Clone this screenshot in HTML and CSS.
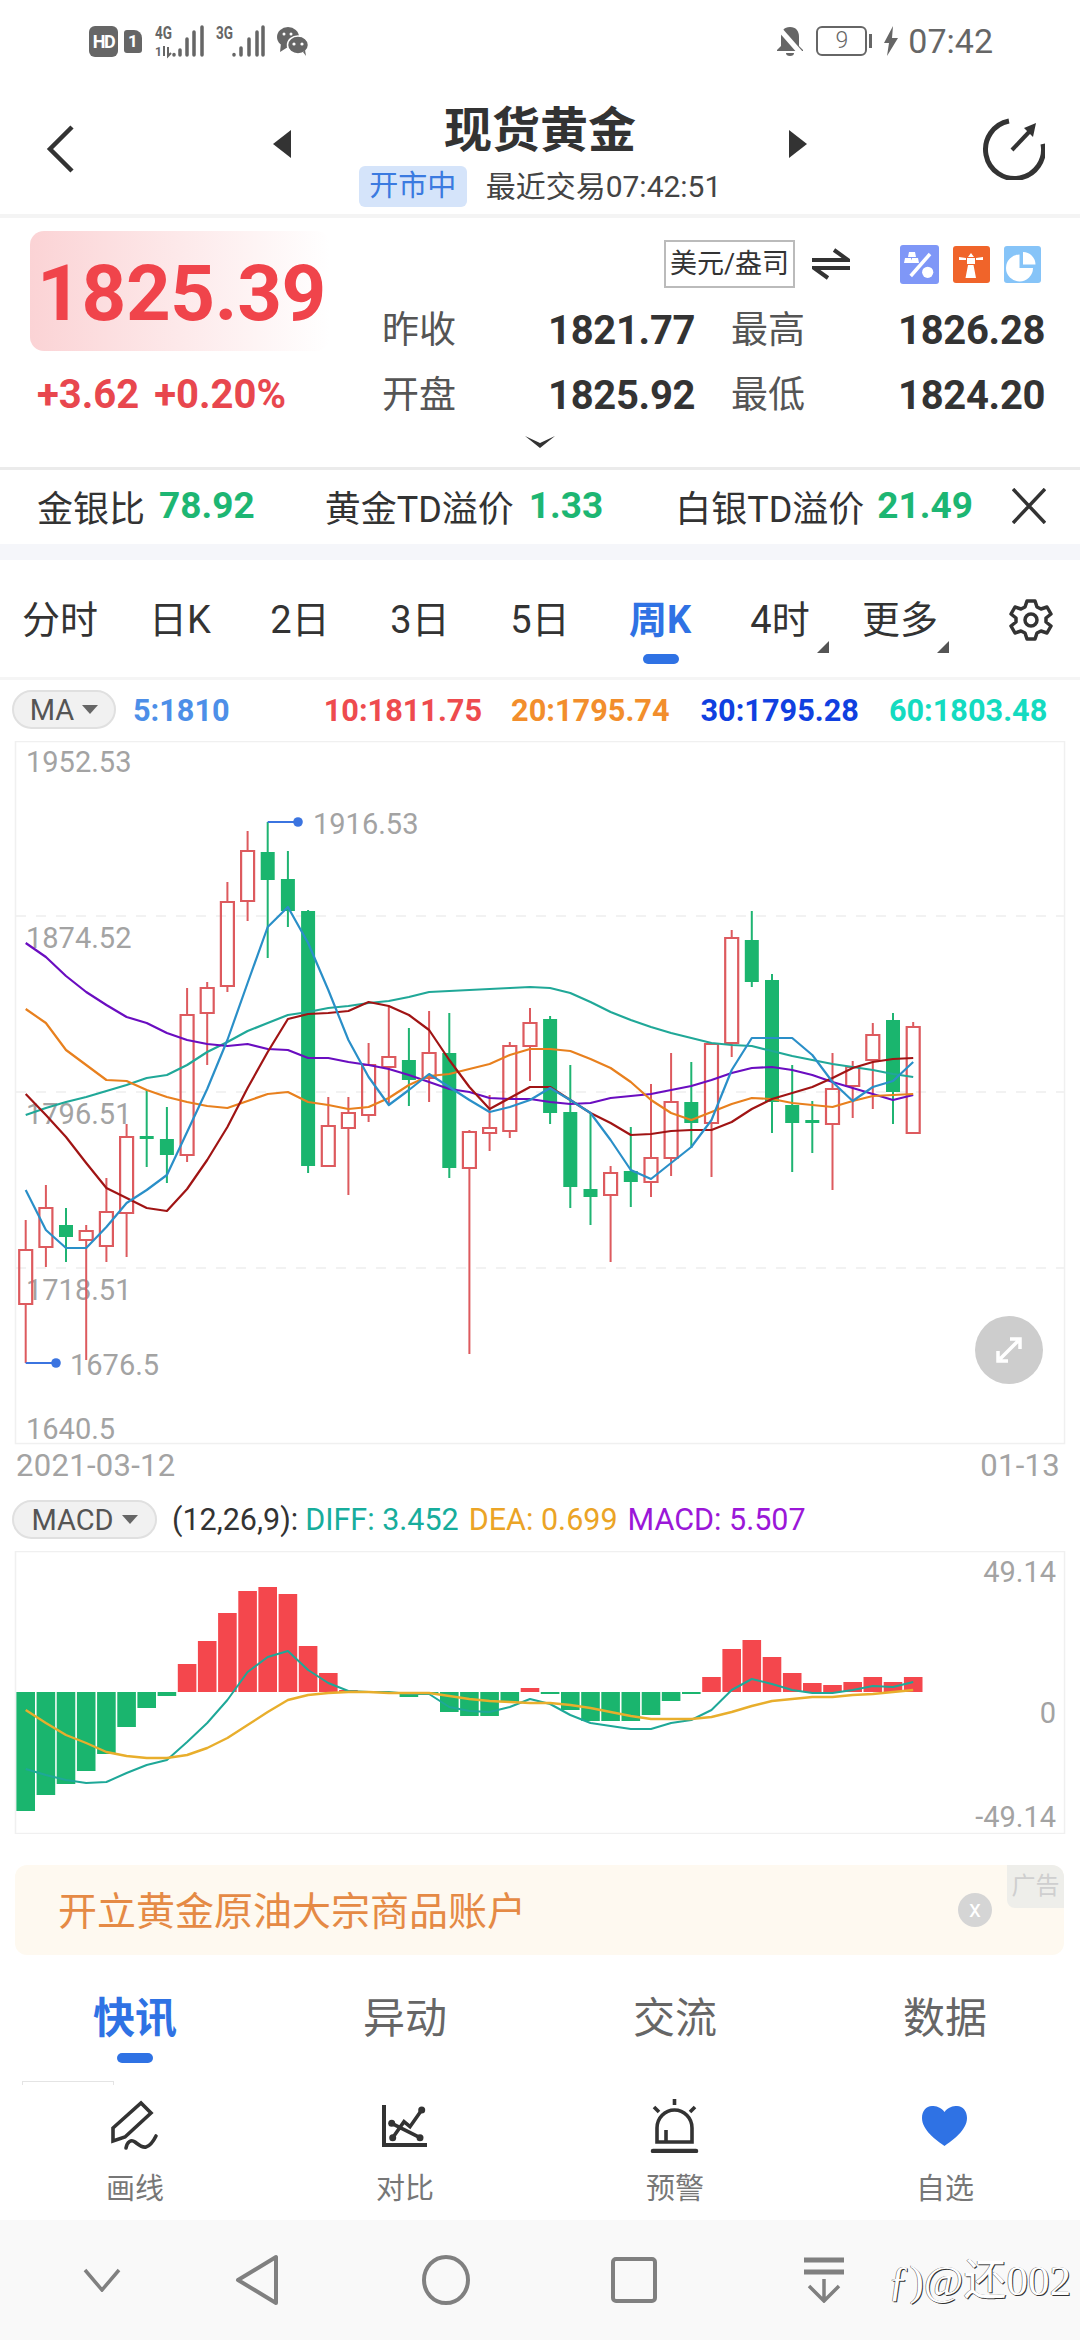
FILE: index.html
```html
<!DOCTYPE html>
<html lang="zh">
<head>
<meta charset="utf-8">
<title>现货黄金</title>
<link rel="stylesheet" href="styles.css">
</head>
<body>
<div class="page">
  <header class="status">
    <div class="status-left">
      <span class="hd">HD</span>
      <span class="sim">1</span>
      <svg class="sig" viewBox="0 -4 52 40" width="52" height="40">
        <text class="sig-t" x="1" y="14" textLength="17" lengthAdjust="spacingAndGlyphs">4G</text>
        <text class="sig-s" x="1" y="31">1</text>
        <path class="sig-a" d="M10 21v10M14 22v9l3-3"/>
        <path class="sig-bar" d="M20 29.5v.5M26 25v5M33 14v16M40 7v23M48 2v28"/>
      </svg>
      <svg class="sig" viewBox="0 -4 52 40" width="52" height="40">
        <text class="sig-t" x="1" y="14" textLength="17" lengthAdjust="spacingAndGlyphs">3G</text>
        <path class="sig-bar" d="M19 29.5v.5M26 23v7M34 14v16M42 7v23M48 2v28"/>
      </svg>
      <svg class="wx" viewBox="0 0 32 30" width="32" height="30">
        <ellipse class="wx-a" cx="11" cy="11" rx="11" ry="10"/>
        <path class="wx-a" d="M4 17l-1 9 8-5z"/>
        <ellipse class="wx-b" cx="21" cy="19" rx="10.5" ry="9"/>
        <path class="wx-a" d="M26 26l3 4-1-6z"/>
        <circle class="wx-e" cx="7" cy="8" r="1.5"/><circle class="wx-e" cx="14" cy="8" r="1.5"/>
        <circle class="wx-e" cx="17" cy="18" r="1.6"/><circle class="wx-e" cx="25" cy="18" r="1.6"/>
      </svg>
    </div>
    <div class="status-right">
      <svg class="bell" viewBox="0 0 32 32" width="32" height="32">
        <path class="bell-f" d="M16 2c-6 0-9 4-9 10v9l-4 4v1h26v-1l-4-4v-9c0-6-3-10-9-10z"/>
        <path class="bell-f" d="M12 28h8a4 3 0 0 1-8 0z"/>
        <path class="bell-s" d="M2 0l28 32"/>
      </svg>
      <span class="batt"><span class="batt-n">9</span></span><span class="batt-tip"></span>
      <svg class="bolt" viewBox="0 0 14 30" width="14" height="30"><path class="bell-f" d="M9 0L0 17h5L3 30l11-18H8z"/></svg>
      <span class="clock">07:42</span>
    </div>
  </header>

  <nav class="nav">
    <svg class="back" viewBox="0 0 28 48" width="28" height="48"><path class="ln-dark" d="M26 2L4 24l22 22"/></svg>
    <div class="nav-center">
      <svg class="tri" viewBox="0 0 18 28" width="18" height="28"><path class="fill-dark" d="M18 0v28L0 14z"/></svg>
      <div class="nav-title">
        <h1 class="title">现货黄金</h1>
        <div class="sub"><span class="open">开市中</span><span class="last">最近交易07:42:51</span></div>
      </div>
      <svg class="tri" viewBox="0 0 18 28" width="18" height="28"><path class="fill-dark" d="M0 0v28l18-14z"/></svg>
    </div>
    <svg class="refresh" viewBox="0 0 64 64" width="64" height="64">
      <path class="ln-ref" d="M28 5A29 29 0 1 0 62 28"/>
      <path class="ln-ref2" d="M31 34L49 15"/>
      <path class="fill-dark" d="M43 12l12-5-3 14z"/>
    </svg>
  </nav>

  <section class="quote">
    <div class="quote-main">
      <div class="q-left">
        <div class="price-box"><span class="price">1825.39</span></div>
        <div class="change"><span>+3.62</span><span>+0.20%</span></div>
      </div>
      <div class="q-right">
        <div class="q-tools">
          <span class="unit">美元/盎司</span>
          <svg class="swap" viewBox="0 0 38 32" width="38" height="32"><path class="ln-swap" d="M0 12h36L22 2M38 20H2l14 10"/></svg>
          <svg class="ic ic1" viewBox="0 0 39 39" width="39" height="39">
            <rect class="ic-blue" width="39" height="39" rx="3"/>
            <path class="ic-w" d="M30 9L10.7 31"/>
            <path class="ic-wf" d="M9 7h6l1 5H8zM5 13h6l1 5H4zM12 13h6l1 5h-8z"/>
            <circle class="ic-wf" cx="27.7" cy="27.3" r="5.6"/>
          </svg>
          <svg class="ic ic2" viewBox="0 0 37 37" width="37" height="37">
            <rect class="ic-orange" width="37" height="37" rx="3"/>
            <path class="ic-wf" d="M15 19h5.5l2.500 13H12.500zM14 12h8v6h-8zM15 11l3-4 3 4zM6 11l7 1v2l-7 0zM30 11l-7 1v2l7 0z"/>
          </svg>
          <svg class="ic" viewBox="0 0 37 37" width="37" height="37">
            <rect class="ic-sky" width="37" height="37" rx="3"/>
            <path class="ic-wf" d="M15.5 8.5A13.5 13.5 0 1 0 29 22H15.5zM19 6A12.5 12.5 0 0 1 31.5 18.5H19z"/>
          </svg>
        </div>
        <div class="stats">
          <span class="s-k">昨收</span><span class="s-v">1821.77</span><span class="s-k">最高</span><span class="s-v">1826.28</span>
          <span class="s-k">开盘</span><span class="s-v">1825.92</span><span class="s-k">最低</span><span class="s-v">1824.20</span>
        </div>
      </div>
    </div>
    <svg class="more" viewBox="0 0 30 12" width="30" height="12"><path class="fill-dark" d="M0 0l15 7 15-7-15 12z"/></svg>
  </section>

  <section class="ratio">
    <span class="r-k">金银比</span><span class="r-v r-a">78.92</span>
    <span class="r-k r-b">黄金TD溢价</span><span class="r-v r-c">1.33</span>
    <span class="r-k r-d">白银TD溢价</span><span class="r-v r-e">21.49</span>
    <svg class="r-x" viewBox="0 0 34 36" width="34" height="36"><path class="ln-x" d="M1 1l32 34M33 1L1 35"/></svg>
  </section>
  <div class="band"></div>

  <section class="periods">
    <span class="p">分时</span><span class="p">日K</span><span class="p">2日</span><span class="p">3日</span><span class="p">5日</span>
    <span class="p p-on">周K</span><span class="p p-tri">4时</span><span class="p p-tri">更多</span>
    <svg class="gear" viewBox="0 0 44 44" width="44" height="44">
      <path class="ln-gear" d="M18 3h8l2 6 4 2 6-2 4 7-5 4v4l5 4-4 7-6-2-4 2-2 6h-8l-2-6-4-2-6 2-4-7 5-4v-4l-5-4 4-7 6 2 4-2z"/>
      <circle class="ln-gear" cx="22" cy="22" r="6"/>
    </svg>
  </section>

  <section class="ma-row">
    <span class="pill pill-ma">MA<i class="caret"></i></span>
    <span class="ma m5">5:1810</span>
    <span class="ma m10">10:1811.75</span>
    <span class="ma m20">20:1795.74</span>
    <span class="ma m30">30:1795.28</span>
    <span class="ma m60">60:1803.48</span>
  </section>

  <svg class="kline" viewBox="0 741 1080 707" width="1080" height="707">
    <rect class="frame" x="15.5" y="741.5" width="1049" height="702"/>
    <path class="grid" d="M16 916H1064M16 1092H1064M16 1268H1064"/>
    <text class="ax" x="26" y="772">1952.53</text>
    <text class="ax" x="26" y="948">1874.52</text>
    <text class="ax" x="26" y="1124">1796.51</text>
    <text class="ax" x="26" y="1300">1718.51</text>
    <text class="ax" x="26" y="1439">1640.5</text>

    <path class="wick-r" d="M25.7 1220V1250M25.7 1304V1363M45.9 1185V1208M45.9 1247V1267M86.2 1225V1231M86.2 1240V1360M106.4 1178V1212M106.4 1246V1262M126.6 1124V1137M126.6 1213V1257M187.1 988V1015M187.1 1155V1162M207.2 982V988M207.2 1013V1065M227.4 882V902M227.4 986V992M247.6 831V851M247.6 901V921M328.3 1097V1126M348.4 1097V1113M348.4 1128V1195M368.6 1043V1065M368.6 1115V1122M388.8 1007V1057M388.8 1067V1105M429.1 1011V1053M429.1 1078V1102M469.4 1130V1132M469.4 1168V1354M489.6 1095V1128M489.6 1133V1151M509.8 1042V1046M509.8 1131V1138M530 1008V1023M530 1046V1081M610.6 1166V1173M610.6 1195V1262M651 1084V1158M651 1182V1197M671.1 1053V1102M671.1 1158V1176M711.5 1123V1177M731.7 930V938M731.7 1043V1057M832.5 1053V1089M832.5 1124V1190M852.7 1061V1067M852.7 1086V1118M872.8 1023V1035M872.8 1060V1109M913.2 1022V1027"/>
    <path class="body-r" d="M19.2 1250h13v54h-13zM39.4 1208h13v39h-13zM79.7 1231h13v9h-13zM99.9 1212h13v34h-13zM120.1 1137h13v76h-13zM180.6 1015h13v140h-13zM200.7 988h13v25h-13zM220.9 902h13v84h-13zM241.1 851h13v50h-13zM321.8 1126h13v40h-13zM341.9 1113h13v15h-13zM362.1 1065h13v50h-13zM382.3 1057h13v10h-13zM422.6 1053h13v25h-13zM462.9 1132h13v36h-13zM483.1 1128h13v5h-13zM503.3 1046h13v85h-13zM523.5 1023h13v23h-13zM604.1 1173h13v22h-13zM644.5 1158h13v24h-13zM664.6 1102h13v56h-13zM705 1044h13v79h-13zM725.2 938h13v105h-13zM826 1089h13v35h-13zM846.2 1067h13v19h-13zM866.3 1035h13v25h-13zM906.7 1027h13v106h-13z"/>

    <path class="wick-g" d="M66 1208V1262M146.7 1090V1167M166.9 1107V1183M267.7 822V958M287.9 851V927M308.1 910V1173M408.9 1028V1106M449.3 1013V1178M550.1 1016V1124M570.3 1065V1208M590.5 1113V1225M630.8 1127V1207M691.3 1062V1148M751.8 911V987M772 974V1133M792.2 1065V1172M812.3 1101V1153M893 1013V1124"/>
    <path class="body-g" d="M59 1225h14v12h-14zM139.7 1136h14v3h-14zM159.9 1139h14v16h-14zM260.7 852h14v28h-14zM280.9 879h14v32h-14zM301.1 911h14v255h-14zM401.9 1060h14v20h-14zM442.3 1053h14v115h-14zM543.1 1019h14v94h-14zM563.3 1112h14v75h-14zM583.5 1189h14v8h-14zM623.8 1171h14v11h-14zM684.3 1102h14v21h-14zM744.8 940h14v42h-14zM765 980h14v122h-14zM785.2 1105h14v18h-14zM805.3 1120h14v3h-14zM886 1020h14v72h-14z"/>

    <polyline class="l l60" points="25.7,1115 45.9,1108 66,1102 86.2,1097 106.4,1091 126.6,1085 146.7,1078 166.9,1075 187.1,1065 207.2,1052 227.4,1042 247.6,1031 267.7,1023 287.9,1015 308.1,1012 328.3,1008 348.4,1006 368.6,1003 388.8,1001 408.9,997 429.1,992 449.3,991 469.4,990 489.6,989 509.8,988 530,987 550.1,988 570.3,993 590.5,1002 610.6,1012 630.8,1020 651,1027 671.1,1033 691.3,1038 711.5,1043 731.7,1045 751.8,1046 772,1051 792.2,1056 812.3,1060 832.5,1064 852.7,1067 872.8,1070 893,1074 913.2,1077"/>
    <polyline class="l l30" points="25.7,943 45.9,957 66,976 86.2,992 106.4,1005 126.6,1017 146.7,1023 166.9,1033 187.1,1040 207.2,1044 227.4,1046 247.6,1044 267.7,1049 287.9,1050 308.1,1058 328.3,1058 348.4,1062 368.6,1065 388.8,1069 408.9,1075 429.1,1082 449.3,1089 469.4,1092 489.6,1098 509.8,1099 530,1099 550.1,1102 570.3,1104 590.5,1103 610.6,1098 630.8,1096 651,1094 671.1,1090 691.3,1086 711.5,1080 731.7,1073 751.8,1068 772,1067 792.2,1070 812.3,1075 832.5,1082 852.7,1088 872.8,1094 893,1100 913.2,1095"/>
    <polyline class="l l20" points="25.7,1009 45.9,1023 66,1050 86.2,1065 106.4,1080 126.6,1081 146.7,1090 166.9,1097 187.1,1102 207.2,1106 227.4,1108 247.6,1101 267.7,1094 287.9,1092 308.1,1102 328.3,1105 348.4,1109 368.6,1107 388.8,1098 408.9,1085 429.1,1076 449.3,1074 469.4,1069 489.6,1064 509.8,1055 530,1049 550.1,1049 570.3,1051 590.5,1059 610.6,1068 630.8,1082 651,1100 671.1,1113 691.3,1120 711.5,1112 731.7,1104 751.8,1098 772,1099 792.2,1103 812.3,1105 832.5,1107 852.7,1101 872.8,1096 893,1095 913.2,1094"/>
    <polyline class="l l10" points="25.7,1094 45.9,1115 66,1137 86.2,1163 106.4,1188 126.6,1198 146.7,1208 166.9,1211 187.1,1189 207.2,1160 227.4,1127 247.6,1088 267.7,1052 287.9,1019 308.1,1014 328.3,1013 348.4,1011 368.6,1002 388.8,1006 408.9,1015 429.1,1030 449.3,1060 469.4,1087 489.6,1109 509.8,1098 530,1087 550.1,1087 570.3,1100 590.5,1113 610.6,1123 630.8,1135 651,1134 671.1,1131 691.3,1130 711.5,1130 731.7,1122 751.8,1109 772,1099 792.2,1093 812.3,1087 832.5,1078 852.7,1068 872.8,1062 893,1059 913.2,1058"/>
    <polyline class="l l5" points="25.7,1190 45.9,1230 66,1248 86.2,1248 106.4,1227 126.6,1203 146.7,1190 166.9,1175 187.1,1132 207.2,1089 227.4,1040 247.6,983 267.7,927 287.9,907 308.1,943 328.3,990 348.4,1040 368.6,1077 388.8,1105 408.9,1090 429.1,1074 449.3,1087 469.4,1100 489.6,1112 509.8,1107 530,1100 550.1,1088 570.3,1100 590.5,1113 610.6,1140 630.8,1170 651,1179 671.1,1163 691.3,1147 711.5,1120 731.7,1070 751.8,1038 772,1038 792.2,1038 812.3,1055 832.5,1082 852.7,1101 872.8,1087 893,1081 913.2,1062"/>

    <path class="mark" d="M267.7 822H298M25.7 1363H56"/>
    <circle class="dot" cx="298" cy="822" r="4.8"/>
    <circle class="dot" cx="56" cy="1363" r="4.8"/>
    <text class="ax" x="313" y="834">1916.53</text>
    <text class="ax" x="70" y="1375">1676.5</text>
    <circle class="zoom-bg" cx="1009" cy="1350" r="34"/>
    <path class="zoom-a" d="M1000 1359l18-18M1010 1339h10v10M1008 1361h-10v-10"/>
  </svg>

  <div class="dates"><span>2021-03-12</span><span>01-13</span></div>

  <section class="macd-row">
    <span class="pill pill-macd">MACD<i class="caret"></i></span>
    <span class="mc-par">(12,26,9):</span>
    <span class="mc-diff">DIFF: 3.452</span>
    <span class="mc-dea">DEA: 0.699</span>
    <span class="mc-macd">MACD: 5.507</span>
  </section>

  <svg class="macd" viewBox="0 1551 1080 283" width="1080" height="283">
    <rect class="frame" x="15.5" y="1551.5" width="1049" height="282"/>
    <path class="bar-g" d="M16.4 1692h18.6V1811h-18.6zM36.6 1692h18.6V1795h-18.6zM56.7 1692h18.6V1784h-18.6zM76.9 1692h18.6V1771h-18.6zM97.1 1692h18.6V1754h-18.6zM117.3 1692h18.6V1727h-18.6zM137.4 1692h18.6V1708h-18.6zM157.6 1692h18.6V1696h-18.6zM399.6 1692h18.6V1697h-18.6zM419.8 1692h18.6V1694h-18.6zM440 1692h18.6V1712h-18.6zM460.1 1692h18.6V1716h-18.6zM480.3 1692h18.6V1716h-18.6zM500.5 1692h18.6V1702h-18.6zM540.8 1692h18.6V1694h-18.6zM561 1692h18.6V1710h-18.6zM581.2 1692h18.6V1721h-18.6zM601.3 1692h18.6V1721h-18.6zM621.5 1692h18.6V1721h-18.6zM641.7 1692h18.6V1715h-18.6zM661.8 1692h18.6V1701h-18.6zM682 1692h18.6V1694h-18.6z"/>
    <path class="bar-r" d="M177.8 1664h18.6V1692h-18.6zM197.9 1641h18.6V1692h-18.6zM218.1 1613h18.6V1692h-18.6zM238.3 1591h18.6V1692h-18.6zM258.4 1587h18.6V1692h-18.6zM278.6 1594h18.6V1692h-18.6zM298.8 1646h18.6V1692h-18.6zM319 1673h18.6V1692h-18.6zM339.1 1690h18.6V1692h-18.6zM520.7 1688h18.6V1692h-18.6zM702.2 1677h18.6V1692h-18.6zM722.4 1649h18.6V1692h-18.6zM742.5 1640h18.6V1692h-18.6zM762.7 1657h18.6V1692h-18.6zM782.9 1673h18.6V1692h-18.6zM803 1683h18.6V1692h-18.6zM823.2 1685h18.6V1692h-18.6zM843.4 1682h18.6V1692h-18.6zM863.5 1677h18.6V1692h-18.6zM883.7 1682h18.6V1692h-18.6zM903.9 1677h18.6V1692h-18.6z"/>
    <polyline class="l diff" points="25.7,1769 45.9,1775 66,1780 86.2,1783 106.4,1782 126.6,1773 146.7,1765 166.9,1760 187.1,1742 207.2,1723 227.4,1700 247.6,1672 267.7,1657 287.9,1651 308.1,1670 328.3,1683 348.4,1691 368.6,1692 388.8,1692 408.9,1694 429.1,1694 449.3,1707 469.4,1711 489.6,1712 509.8,1707 530,1699 550.1,1704 570.3,1715 590.5,1723 610.6,1726 630.8,1729 651,1729 671.1,1723 691.3,1720 711.5,1710 731.7,1690 751.8,1679 772,1684 792.2,1690 812.3,1693 832.5,1693 852.7,1690 872.8,1686 893,1687 913.2,1682"/>
    <polyline class="l dea" points="25.7,1710 45.9,1723 66,1735 86.2,1743 106.4,1752 126.6,1756 146.7,1758 166.9,1758 187.1,1755 207.2,1748 227.4,1738 247.6,1725 267.7,1712 287.9,1700 308.1,1695 328.3,1693 348.4,1692 368.6,1692 388.8,1693 408.9,1693 429.1,1693 449.3,1696 469.4,1699 489.6,1701 509.8,1702 530,1703 550.1,1703 570.3,1705 590.5,1708 610.6,1712 630.8,1716 651,1719 671.1,1719 691.3,1719 711.5,1717 731.7,1712 751.8,1706 772,1701 792.2,1699 812.3,1697 832.5,1697 852.7,1695 872.8,1694 893,1692 913.2,1690"/>
    <text class="ax ax-m" x="1056" y="1582">49.14</text>
    <text class="ax ax-m" x="1056" y="1723">0</text>
    <text class="ax ax-m" x="1056" y="1827">-49.14</text>
  </svg>

  <aside class="ad">
    <span class="ad-t">开立黄金原油大宗商品账户</span>
    <span class="ad-x">x</span>
    <span class="ad-tag">广告</span>
  </aside>

  <section class="tabs">
    <div class="tab-row">
      <span class="tab tab-on">快讯</span><span class="tab">异动</span><span class="tab">交流</span><span class="tab">数据</span>
    </div>
    <i class="stub"></i>
  </section>

  <section class="tools">
    <div class="tool">
      <svg viewBox="0 0 50 56" width="50" height="56">
        <path class="ln-tool" d="M3 31L31 6l10 10-26 24-12 4z"/>
        <path class="ln-tool-r" d="M16 51c1-6 5-9 9-6s7 6 11 5 7-5 10-11"/>
      </svg>
      <span class="t-l">画线</span>
    </div>
    <div class="tool">
      <svg viewBox="0 0 50 56" width="50" height="56">
        <path class="ln-axis" d="M4 8v40h43"/>
        <path class="ln-tool" d="M11.7 26.3L40 40.7M12.7 40.7L24 24.7l6 5L41.7 13"/>
        <circle class="dk" cx="11.7" cy="26.3" r="3.5"/><circle class="dk" cx="40" cy="40.7" r="3.5"/>
        <circle class="dk" cx="12.7" cy="40.7" r="3.5"/><circle class="dk" cx="41.7" cy="13" r="3.5"/>
      </svg>
      <span class="t-l">对比</span>
    </div>
    <div class="tool">
      <svg viewBox="0 0 50 56" width="50" height="56">
        <path class="ln-tool" d="M24.5 2v6M4 10l5 5M45 10l-5 5M7 45V31a17.5 18 0 0 1 35 0v14zM16 33v12"/>
        <path class="ln-tool3" d="M3 54h43"/>
      </svg>
      <span class="t-l">预警</span>
    </div>
    <div class="tool">
      <svg viewBox="0 0 50 56" width="50" height="56">
        <path class="heart" d="M24.5 15C21 10 16 9 12 9 6 9 2 14 2 21c0 12 14 22 22.5 28C33 43 47 33 47 21c0-7-4-12-10-12-4 0-9 1-12.5 6z"/>
      </svg>
      <span class="t-l">自选</span>
    </div>
  </section>

  <footer class="sysnav">
    <svg class="n1" viewBox="0 0 38 24" width="38" height="24"><path class="ln-nav" d="M2 2l17 20L36 2"/></svg>
    <svg class="n2" viewBox="0 0 44 52" width="44" height="52"><path class="ln-nav3" d="M41 3v46L3 26z"/></svg>
    <svg class="n3" viewBox="0 0 48 50" width="48" height="50"><ellipse class="ln-nav3" cx="24" cy="25" rx="22" ry="23"/></svg>
    <svg class="n4" viewBox="0 0 46 46" width="46" height="46"><rect class="ln-nav3" x="2" y="2" width="42" height="42" rx="3"/></svg>
    <svg class="n5" viewBox="0 0 40 46" width="40" height="46"><path class="ln-nav4" d="M0 3h40M0 15h40"/><path class="ln-nav" d="M20 22v22M5 29l15 15 15-15"/></svg>
    <span class="wm">ƒ)@还002</span>
  </footer>
</div>
</body>
</html>
```

FILE: styles.css
```css
* { box-sizing: border-box; }
html, body { margin: 0; padding: 0; background: #fff; }
body { font-family: Roboto, "Noto Sans CJK SC", sans-serif; color: #333; }
.page { position: relative; width: 1080px; height: 2340px; overflow: hidden; background: #fff; }
svg { display: block; flex: none; }
h1 { margin: 0; }

/* status bar */
.status { height: 80px; display: flex; justify-content: space-between; align-items: center; padding: 2px 87px 0 89px; }
.status-left, .status-right { display: flex; align-items: center; }
.hd { width: 29px; height: 31px; border-radius: 6px; background: #666; color: #fff; font-size: 18px; font-weight: 700; text-align: center; line-height: 31px; letter-spacing: -1.5px; }
.sim { width: 18px; height: 23px; margin-left: 6px; border-radius: 3px 8px 3px 3px; background: #666; color: #fff; font-size: 17px; font-weight: 700; text-align: center; line-height: 23px; }
.sig { margin-left: 12px; }
.sig + .sig { margin-left: 9px; }
.sig-t { font: 700 18px Roboto, sans-serif; fill: #666; }
.sig-s { font: 700 12px Roboto, sans-serif; fill: #666; }
.sig-a { fill: none; stroke: #666; stroke-width: 2; }
.sig-bar { fill: none; stroke: #666; stroke-width: 3.5; stroke-linecap: round; }
.wx { margin-left: 10px; }
.wx-a { fill: #666; }
.wx-b { fill: #666; stroke: #fff; stroke-width: 1.5; }
.wx-e { fill: #fff; }
.bell-f { fill: #666; }
.bell-s { stroke: #fff; stroke-width: 5; fill: none; }
.bell { margin-right: 10px; }
.batt { width: 51px; height: 30px; border: 2.5px solid #666; border-radius: 6px; color: #666; font-size: 23px; text-align: center; line-height: 25px; font-weight: 300; }
.batt-tip { width: 3px; height: 14px; background: #666; margin: 0 12px 0 2px; }
.bolt { margin-right: 10px; }
.clock { color: #666; font-size: 34px; line-height: 40px; }

/* nav */
.nav { height: 134px; display: flex; align-items: flex-start; justify-content: space-between; padding: 45px 35px 0 46px; }
.ln-dark { fill: none; stroke: #333; stroke-width: 4.5; }
.fill-dark { fill: #333; }
.nav-center { display: flex; align-items: flex-start; margin: -25px 0 0 25px; }
.tri { margin-top: 30px; }
.nav-title { width: 498px; display: flex; flex-direction: column; align-items: center; }
.title { font-size: 48px; line-height: 62px; font-weight: 700; color: #333; }
.sub { display: flex; align-items: center; margin-top: 4px; }
.open { width: 108px; height: 41px; border-radius: 6px; background: #d5e4fa; color: #3b7ae0; font-size: 29px; line-height: 41px; text-align: center; }
.last { margin-left: 19px; font-size: 30px; color: #444; line-height: 41px; white-space: nowrap; }
.refresh { margin-top: -9px; }
.ln-ref { fill: none; stroke: #333; stroke-width: 5; }
.ln-ref2 { fill: none; stroke: #333; stroke-width: 4; }

/* quote */
.quote { height: 253px; border-top: 4px solid #f4f4f4; display: flex; flex-direction: column; align-items: center; }
.quote-main { width: 100%; height: 216px; display: flex; }
.q-left { width: 382px; padding: 13px 0 0 30px; }
.price-box { width: 300px; height: 120px; border-radius: 14px; background: linear-gradient(90deg, #fbd3d5, #fff); display: flex; align-items: center; padding: 5px 0 0 7px; }
.price { font-size: 78px; font-weight: 700; color: #f0444b; line-height: 1; letter-spacing: -0.3px; white-space: nowrap; }
.change { display: flex; gap: 15px; margin: 21px 0 0 7px; color: #e8474e; font-size: 40px; font-weight: 700; line-height: 46px; white-space: nowrap; }
.q-right { flex: 1; }
.q-tools { display: flex; align-items: center; height: 48px; margin: 22px 0 0 282px; }
.unit { width: 131px; height: 48px; border: 2px solid #bbb; font-size: 27px; line-height: 44px; text-align: center; color: #333; white-space: nowrap; }
.swap { margin-left: 17px; }
.ic { margin-left: 14px; }
.ic1 { margin-left: 50px; }
.ln-swap { fill: none; stroke: #333; stroke-width: 4; }
.ic-blue { fill: #7f97f7; }
.ic-orange { fill: #f0642a; }
.ic-sky { fill: #86c4f8; }
.ic-w { stroke: #fff; stroke-width: 3.5; fill: none; }
.ic-wf { fill: #fff; }
.stats { display: grid; grid-template-columns: 166px 183px 167px auto; grid-auto-rows: 65px; align-items: center; margin-top: 10px; }
.s-k { font-size: 37px; line-height: 65px; color: #555; }
.s-v { font-size: 40px; line-height: 65px; font-weight: 700; color: #333; letter-spacing: -0.3px; white-space: nowrap; }
.more { margin-top: 2px; }

/* ratio */
.ratio { height: 77px; border-top: 3px solid #ebebeb; display: flex; align-items: center; padding: 0 0 3px 37px; }
.r-k { font-size: 36px; color: #333; white-space: nowrap; }
.r-v { font-size: 37px; font-weight: 700; color: #1db673; white-space: nowrap; }
.r-a { margin-left: 14px; }
.r-b { margin-left: 70px; }
.r-c { margin-left: 15px; }
.r-d { margin-left: 72px; }
.r-e { margin-left: 13px; }
.r-x { margin-left: 39px; }
.ln-x { stroke: #333; stroke-width: 3.5; fill: none; }
.band { height: 16px; background: #f5f6fa; }

/* periods */
.periods { height: 120px; display: grid; grid-template-columns: repeat(8, 120px) auto; align-items: center; border-bottom: 3px solid #f5f5f5; padding-top: 3px; }
.p { position: relative; font-size: 38px; color: #333; text-align: center; line-height: 50px; height: 50px; white-space: nowrap; }
.p-on { color: #2f72e4; font-weight: 700; }
.p-on::after { content: ""; position: absolute; left: 43px; top: 59px; width: 36px; height: 10px; border-radius: 5px; background: #2f72e4; }
.p-tri::after { content: ""; position: absolute; right: 11px; bottom: -8px; border-left: 12px solid transparent; border-bottom: 12px solid #555; }
.gear { margin-left: 49px; }
.ln-gear { fill: none; stroke: #333; stroke-width: 3.5; stroke-linejoin: round; }

/* MA row */
.ma-row { height: 61px; display: flex; align-items: center; padding-left: 12px; }
.pill { display: flex; align-items: center; justify-content: center; gap: 8px; height: 39px; border: 2px solid #e0e0e0; background: #f1f1f1; border-radius: 20px; color: #555; font-size: 29px; line-height: 34px; }
.pill-ma { width: 104px; margin-top: -2px; }
.pill-macd { width: 145px; }
.caret { display: block; width: 0; height: 0; border-left: 8px solid transparent; border-right: 8px solid transparent; border-top: 9px solid #666; }
.ma { font-size: 30.7px; font-weight: 700; white-space: nowrap; line-height: 40px; }
.m5 { color: #4d8fe8; margin-left: 17px; }
.m10 { color: #ee4b4e; margin-left: 94px; }
.m20 { color: #f28e2c; margin-left: 29px; }
.m30 { color: #1040e0; margin-left: 31px; }
.m60 { color: #14dbc0; margin-left: 30px; }

/* chart */
.frame { fill: none; stroke: #f0f0f0; stroke-width: 1.5; }
.grid { fill: none; stroke: #eee; stroke-width: 1.5; stroke-dasharray: 10 10; }
.ax { font: 400 29px Roboto, sans-serif; fill: #a3a3a3; }
.ax-m { font-size: 29px; text-anchor: end; }
.wick-r { fill: none; stroke: #dd5a5e; stroke-width: 2; }
.body-r { fill: none; stroke: #dd5a5e; stroke-width: 2.2; }
.wick-g { fill: none; stroke: #1fb472; stroke-width: 2; }
.body-g { fill: #1ab56e; }
.l { fill: none; stroke-width: 2.2; stroke-linejoin: round; }
.l5 { stroke: #2a8fc8; }
.l10 { stroke: #a01414; }
.l20 { stroke: #e8801e; }
.l30 { stroke: #6a0dc0; }
.l60 { stroke: #20a898; }
.mark { fill: none; stroke: #3b74e0; stroke-width: 2; }
.dot { fill: #3b74e0; }
.zoom-bg { fill: #cdcdcd; }
.zoom-a { fill: none; stroke: #fff; stroke-width: 3.5; }

.dates { height: 42px; display: flex; justify-content: space-between; padding: 0 20px 6px 16px; align-items: center; color: #a3a3a3; font-size: 31px; letter-spacing: 0.3px; line-height: 36px; }

/* MACD */
.macd-row { height: 61px; display: flex; align-items: flex-start; padding: 10px 0 0 12px; font-size: 30.5px; line-height: 40px; white-space: nowrap; }
.mc-par { margin-left: 15px; color: #333; }
.mc-diff { margin-left: 7px; color: #17ad9c; }
.mc-dea { margin-left: 10px; color: #eba426; }
.mc-macd { margin-left: 10px; color: #9b17d8; }
.bar-g { fill: #1ab56e; }
.bar-r { fill: #f4474d; }
.diff { stroke: #1ea898; stroke-width: 2; }
.dea { stroke: #e8ae2c; stroke-width: 2.4; }

/* ad */
.ad { position: relative; height: 90px; margin: 31px 16px 0 15px; background: #fef9f0; border-radius: 12px; padding: 3px 0 0 43px; display: flex; align-items: center; }
.ad-t { font-size: 39px; color: #e58a45; line-height: 60px; white-space: nowrap; }
.ad-x { position: absolute; left: 943px; top: 28px; width: 34px; height: 34px; border-radius: 50%; background: #d5d5d5; color: #fff; font-size: 24px; line-height: 32px; text-align: center; }
.ad-tag { position: absolute; right: 0; top: 0; width: 57px; height: 43px; border-radius: 0 12px 0 8px; background: #eeeeea; color: #cfcfcf; font-size: 24px; line-height: 43px; text-align: center; white-space: nowrap; }

/* tabs */
.tabs { height: 130px; display: flex; flex-direction: column; }
.tab-row { display: grid; grid-template-columns: repeat(4, 270px); height: 126px; }
.tab { position: relative; font-size: 42px; color: #666; text-align: center; line-height: 56px; padding-top: 36px; }
.tab-on { color: #2f72e4; font-weight: 700; }
.tab-on::after { content: ""; position: absolute; left: 117px; top: 98px; width: 36px; height: 10px; border-radius: 5px; background: #2f72e4; }
.stub { display: block; width: 92px; height: 4px; margin-left: 22px; border: 1px solid #e4e4e4; border-bottom: 0; }

/* tools */
.tools { height: 135px; display: grid; grid-template-columns: repeat(4, 270px); background: #fff; border-radius: 10px 10px 0 0; }
.tool { display: flex; flex-direction: column; align-items: center; padding-top: 12px; }
.t-l { font-size: 29px; color: #777; line-height: 40px; margin-top: 16px; }
.ln-tool { fill: none; stroke: #333; stroke-width: 3.6; stroke-linejoin: miter; }
.ln-tool-r { fill: none; stroke: #333; stroke-width: 3.6; stroke-linecap: round; }
.ln-axis { fill: none; stroke: #333; stroke-width: 4; }
.dk { fill: #333; }
.ln-tool3 { fill: none; stroke: #333; stroke-width: 4.5; stroke-linecap: round; }
.heart { fill: #2f72e4; }

/* system nav */
.sysnav { position: relative; height: 120px; background: #f9f9f9; display: flex; align-items: center; padding-left: 83px; }
.ln-nav { fill: none; stroke: #808080; stroke-width: 3.5; }
.ln-nav3 { fill: none; stroke: #808080; stroke-width: 4; stroke-linejoin: round; }
.ln-nav4 { fill: none; stroke: #808080; stroke-width: 5; }
.n2 { margin-left: 114px; }
.n3 { margin-left: 143px; }
.n4 { margin-left: 141px; }
.n5 { margin-left: 147px; }
.wm { position: absolute; left: 888px; top: 36px; font-family: "Liberation Serif", "Noto Sans CJK SC", serif; font-size: 43px; line-height: 50px; color: #fff; white-space: nowrap; text-shadow: 1px 1px 0 #333, -0.5px 0 0 #555; }
```
